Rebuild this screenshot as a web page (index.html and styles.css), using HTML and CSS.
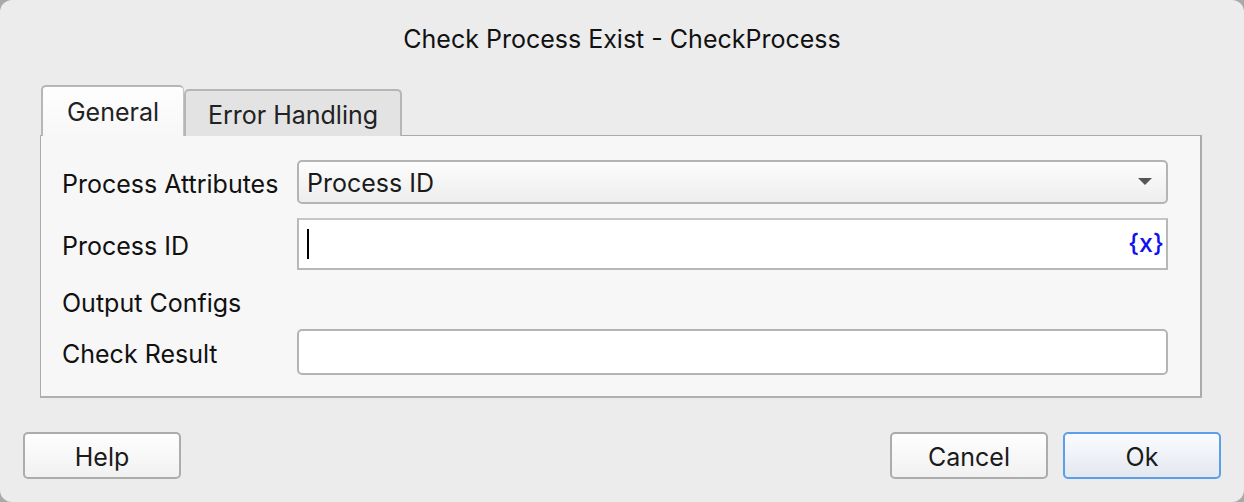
FILE: index.html
```html
<!DOCTYPE html>
<html>
<head>
<meta charset="utf-8">
<link rel="stylesheet" href="styles.css">
</head>
<body>
<div class="window">
  <div class="title">Check Process Exist - CheckProcess</div>
  <div class="tabs">
    <div class="tab active">General</div>
    <div class="tab">Error Handling</div>
  </div>
  <div class="panel">
    <div class="row row-combo">
      <div class="label">Process Attributes</div>
      <div class="combo">
        <span class="combo-text">Process ID</span>
        <svg class="arrow" width="14" height="8" viewBox="0 0 14 8"><path d="M0 0 L14 0 L7 7 Z" fill="#555"/></svg>
      </div>
    </div>
    <div class="row row-input">
      <div class="label">Process ID</div>
      <div class="textbox">
        <span class="caret"></span>
        <span class="var">{x}</span>
      </div>
    </div>
    <div class="row row-section">
      <div class="label">Output Configs</div>
    </div>
    <div class="row row-result">
      <div class="label">Check Result</div>
      <div class="resultbox"></div>
    </div>
  </div>
  <div class="buttons">
    <div class="btn">Help</div>
    <div class="spacer"></div>
    <div class="btn">Cancel</div>
    <div class="btn primary">Ok</div>
  </div>
</div>
</body>
</html>
```
FILE: styles.css
```css
html, body {
  margin: 0;
  padding: 0;
  background: #a9a9a9;
}
body {
  font-family: "Inter", "Liberation Sans", sans-serif;
  font-size: 25px;
  color: #1a1a1a;
}
.window {
  width: 1244px;
  height: 502px;
  box-sizing: border-box;
  border-radius: 12px;
  background: #ececec;
  display: flex;
  flex-direction: column;
  overflow: hidden;
}
.title {
  height: 78px;
  line-height: 78px;
  text-align: center;
  font-size: 25px;
  color: #111;
}
.tabs {
  margin-top: 7px;
  height: 51px;
  padding-left: 41px;
  display: flex;
  align-items: flex-end;
  position: relative;
  z-index: 2;
  margin-bottom: -1px;
}
.tab {
  box-sizing: border-box;
  height: 47px;
  width: 218px;
  border: 2px solid #b6b6b6;
  border-bottom: none;
  border-radius: 5px 5px 0 0;
  background: #e3e3e3;
  display: flex;
  align-items: center;
  justify-content: center;
  padding-top: 2px;
  color: #222;
}
.tab.active {
  height: 51px;
  width: 143px;
  background: linear-gradient(#fefefe, #f7f7f7);
  padding-top: 5px;
  padding-bottom: 5px;
  border-right: 1px solid #c4c4c4;
}
.panel {
  margin: 0 42px 0 40px;
  height: 263px;
  box-sizing: border-box;
  border: 2px solid #ababab;
  border-left-width: 1px;
  border-top-width: 1px;
  border-bottom-color: #b0b0b0;
  background: #f7f7f7;
  padding: 24px 32px 0 21px;
  display: flex;
  flex-direction: column;
}
.row {
  display: flex;
  align-items: center;
}
.label {
  width: 235px;
  flex: none;
  color: #111;
  padding-top: 3px;
}
.combo {
  flex: 1;
  height: 44px;
  box-sizing: border-box;
  border: 2px solid #b4b4b4;
  border-radius: 5px;
  background: linear-gradient(#fdfdfd, #ededed);
  display: flex;
  align-items: center;
  padding: 0 14px 0 8px;
}
.combo-text {
  flex: 1;
  color: #1a1a1a;
  padding-top: 2px;
}
.row-input {
  margin-top: 14px;
}
.textbox {
  flex: 1;
  height: 52px;
  box-sizing: border-box;
  border: 2px solid #b8b8b8;
  border-top-color: #c6c6c6;
  background: #fff;
  display: flex;
  align-items: center;
  padding: 0 2px 0 8px;
}
.caret {
  width: 2px;
  height: 30px;
  background: #000;
}
.var {
  margin-left: auto;
  color: #1010f0;
  font-size: 25px;
  font-weight: 500;
  padding-bottom: 3px;
}
.row-section {
  height: 44px;
  margin-top: 9px;
}
.row-result {
  margin-top: 6px;
}
.resultbox {
  flex: 1;
  height: 46px;
  box-sizing: border-box;
  border: 2px solid #b4b4b4;
  border-radius: 5px;
  background: #fff;
}
.buttons {
  margin-top: 34px;
  padding: 0 23px;
  display: flex;
  gap: 15px;
}
.spacer {
  flex: 1;
}
.btn {
  width: 158px;
  height: 47px;
  box-sizing: border-box;
  border: 2px solid #acacac;
  border-radius: 5px;
  background: linear-gradient(#fefefe, #f1f1f1);
  display: flex;
  align-items: center;
  justify-content: center;
  color: #1a1a1a;
  padding-top: 2px;
}
.btn.primary {
  border-color: #5b9fea;
  background: linear-gradient(#fafcfe, #e3e8ef);
}
```
